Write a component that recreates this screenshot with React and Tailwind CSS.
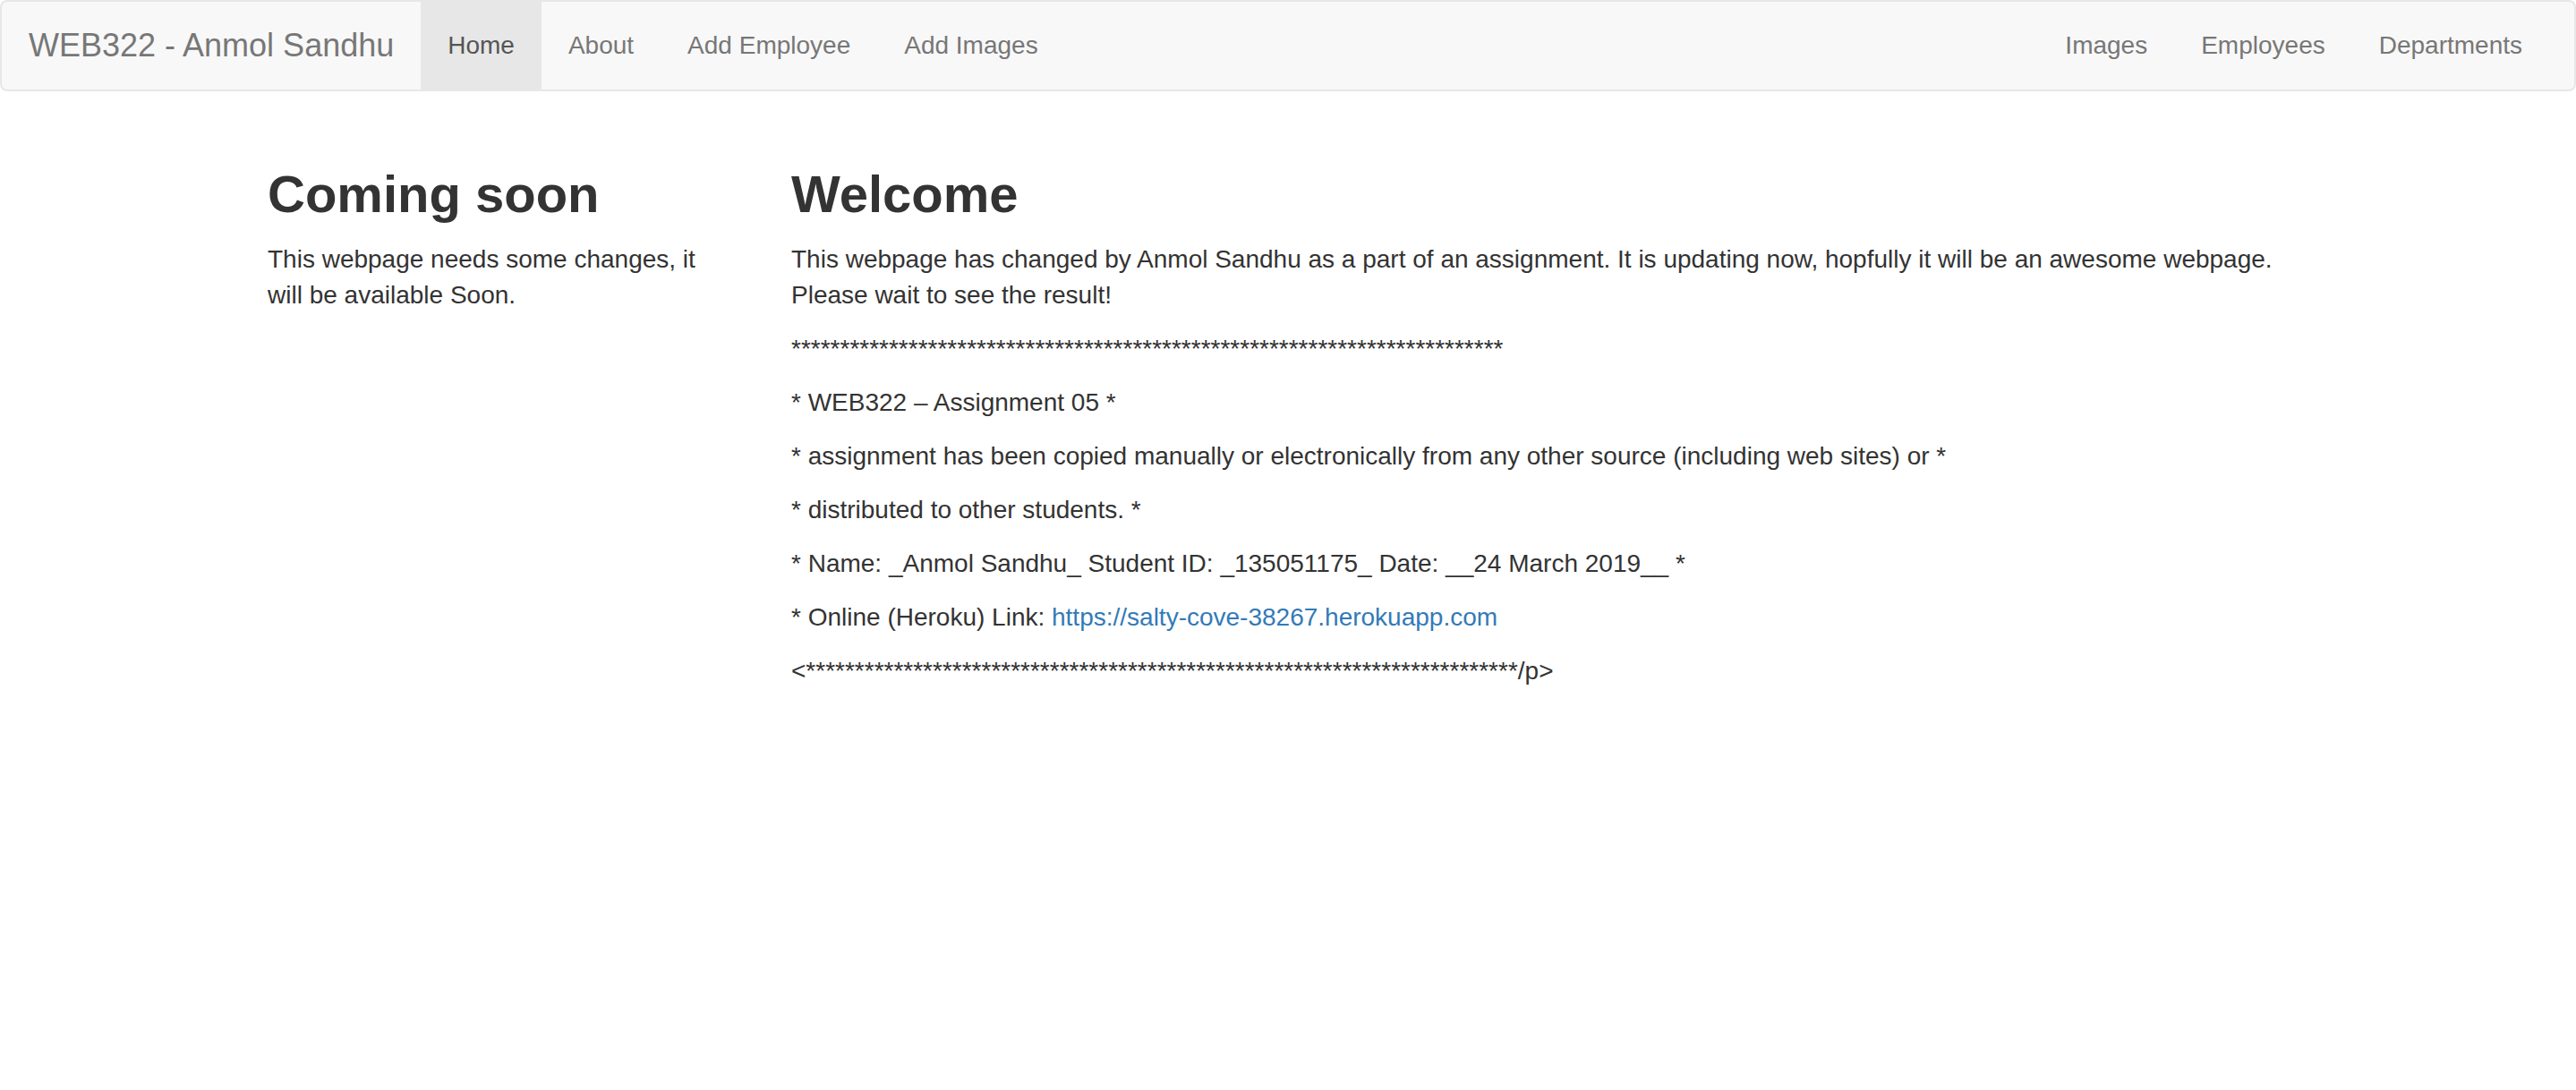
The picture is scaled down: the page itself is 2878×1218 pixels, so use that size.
import React from 'react';

const leftLinks = ['Home', 'About', 'Add Employee', 'Add Images'];
const rightLinks = ['Images', 'Employees', 'Departments'];

const NavLink = ({ label, active }) => (
  <a
    href="#"
    className={
      active
        ? 'block h-full px-[30px] pt-[29px] leading-[40px] text-[28px] text-[#555] bg-[#e7e7e7]'
        : 'block h-full px-[30px] pt-[29px] leading-[40px] text-[28px] text-[#777]'
    }
  >
    {label}
  </a>
);

function Navbar() {
  return (
    <nav className="h-[102px] bg-[#f8f8f8] border-2 border-[#e7e7e7] rounded-[8px] flex justify-between">
      <div className="flex">
        <a href="#" className="block px-[30px] pt-[29px] leading-[40px] text-[36px] text-[#777]">
          WEB322 - Anmol Sandhu
        </a>
        {leftLinks.map((l) => (
          <NavLink key={l} label={l} active={l === 'Home'} />
        ))}
      </div>
      <div className="flex pr-[28px]">
        {rightLinks.map((l) => (
          <NavLink key={l} label={l} />
        ))}
      </div>
    </nav>
  );
}

export default function App() {
  const stars = '*'.repeat(73);
  const lastStars = '*'.repeat(73);
  return (
    <div className="min-h-[1218px] bg-white text-[#333] text-[28px] leading-[40px] font-['Liberation_Sans',Arial,sans-serif]">
      <Navbar />
      <div className="w-[2340px] mx-auto mt-[42px] flex">
        <div className="w-[585px] px-[30px]">
          <h2 className="mt-[40px] mb-[20px] text-[58px] leading-[66px] font-bold">Coming soon</h2>
          <p className="mb-[20px] max-w-[510px]">This webpage needs some changes, it will be available Soon.</p>
        </div>
        <div className="w-[1755px] px-[30px]">
          <h2 className="mt-[40px] mb-[20px] text-[58px] leading-[66px] font-bold">Welcome</h2>
          <p className="mb-[20px]">
            This webpage has changed by Anmol Sandhu as a part of an assignment. It is updating now, hopfully it will be an awesome webpage. Please wait to see the result!
          </p>
          <p className="mb-[20px]">{stars}</p>
          <p className="mb-[20px]">* WEB322 – Assignment 05 *</p>
          <p className="mb-[20px]">* assignment has been copied manually or electronically from any other source (including web sites) or *</p>
          <p className="mb-[20px]">* distributed to other students. *</p>
          <p className="mb-[20px]">* Name: _Anmol Sandhu_ Student ID: _135051175_ Date: __24 March 2019__ *</p>
          <p className="mb-[20px]">
            * Online (Heroku) Link:{' '}
            <a href="#" className="text-[#337ab7]">https://salty-cove-38267.herokuapp.com</a>
          </p>
          <p className="mb-[20px]">{'<' + lastStars + '/p>'}</p>
        </div>
      </div>
    </div>
  );
}
